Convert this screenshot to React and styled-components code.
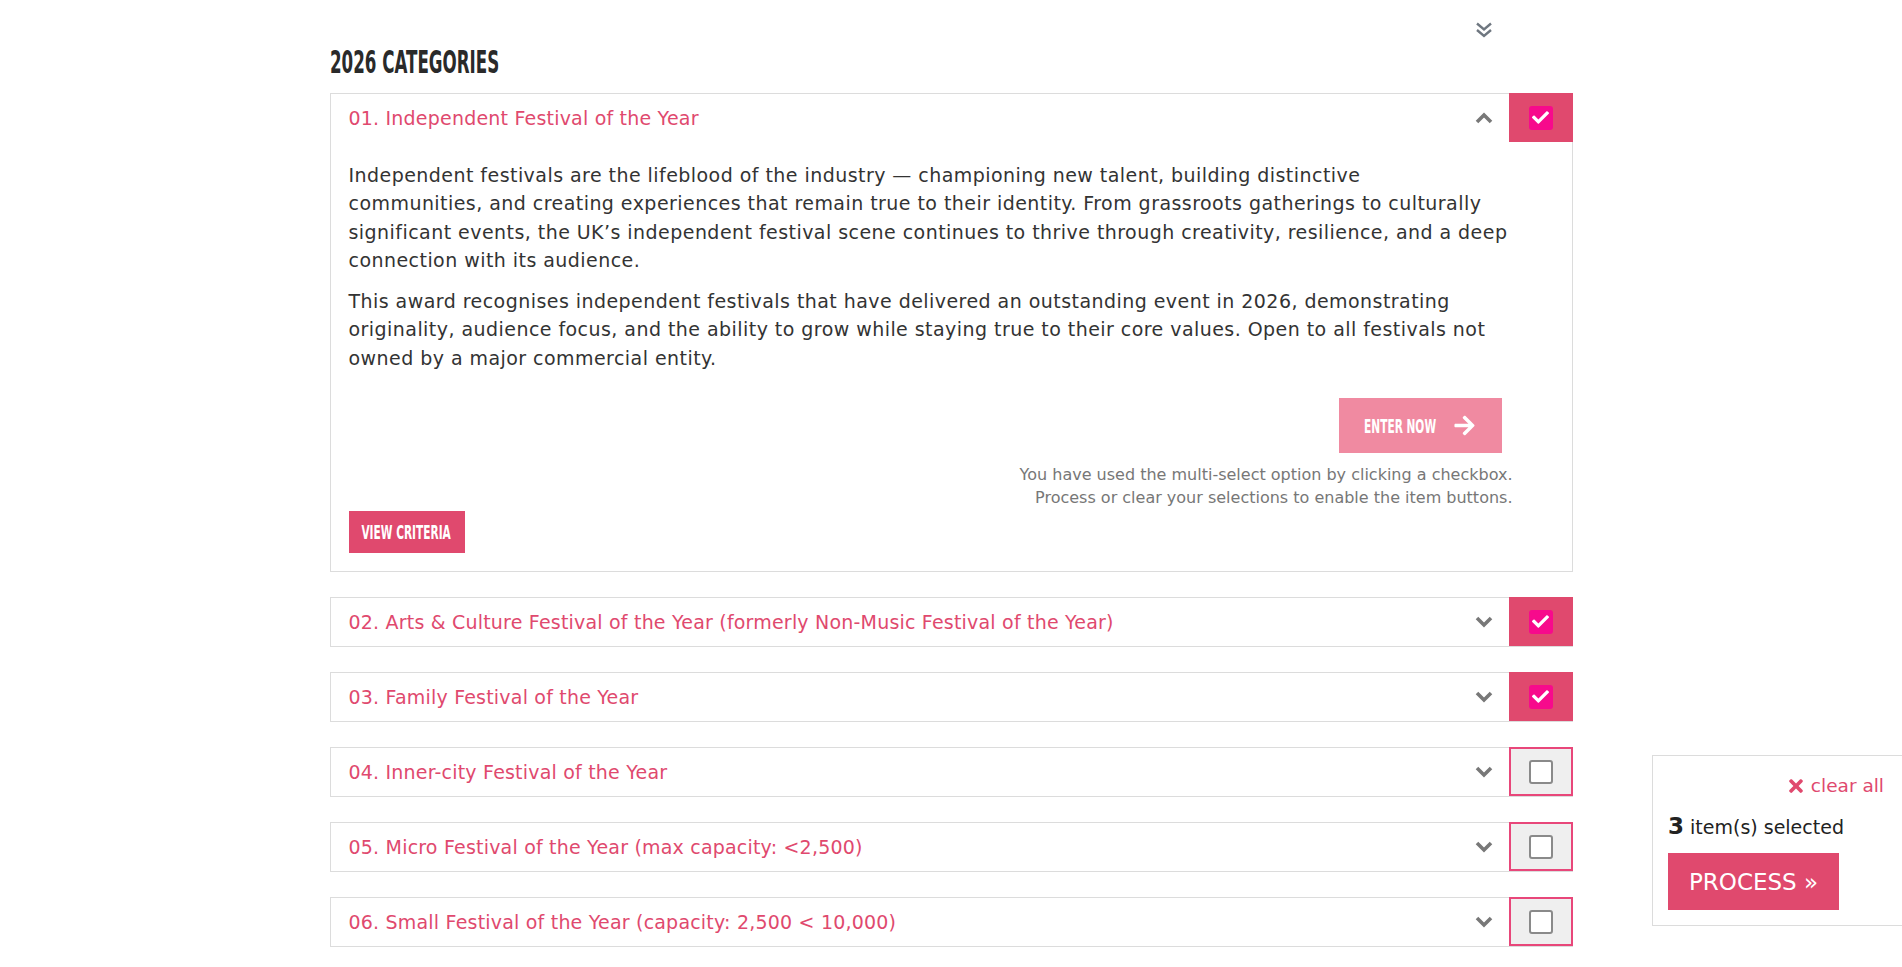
import React, { useState } from "react";
import styled, { createGlobalStyle } from "styled-components";
import { FaArrowRight, FaTimes, FaCheck } from "react-icons/fa";

const pink = "#e0496e";
const body = "'DejaVu Sans', 'Open Sans', sans-serif";
const condensed = "'DejaVu Sans Condensed', 'DejaVu Sans', sans-serif";

const GlobalStyle = createGlobalStyle`
  html, body {
    margin: 0;
    padding: 0;
    background: #fff;
    font-family: ${body};
    color: #333;
  }
`;

const Page = styled.div`
  width: 1243px;
  margin: 0 auto;
`;

const TopBar = styled.div`
  display: flex;
  justify-content: flex-end;
  padding: 22px 80px 0 0;
  height: 16px;
`;

const Heading = styled.h2`
  margin: 10px 0 17px;
  height: 28px;
  font-family: ${condensed};
  font-weight: bold;
  font-size: 32px;
  line-height: 28px;
  text-transform: uppercase;
  color: #2a2a2a;
  transform: scaleX(0.58);
  transform-origin: left center;
  white-space: nowrap;
`;

const List = styled.div`
  display: flex;
  flex-direction: column;
  gap: 25px;
`;

const Item = styled.div`
  border: 1px solid #dcdcdc;
`;

const Header = styled.div`
  display: flex;
  align-items: center;
  height: 48px;
`;

const Title = styled.div`
  flex: 1;
  padding-left: 18px;
  font-size: 19px;
  letter-spacing: 0.2px;
  color: ${pink};
  white-space: nowrap;
`;

const Toggle = styled.svg`
  width: 18px;
  height: 12px;
  margin-right: 16px;
  fill: none;
  stroke: #787878;
  stroke-width: 3.6;
`;

const CheckCell = styled.div`
  display: flex;
  align-items: center;
  justify-content: center;
  box-sizing: border-box;
  width: 64px;
  height: 49px;
  margin: -1px -1px 0 0;
  background: ${({ $on }) => ($on ? pink : "#efefef")};
  border: ${({ $on }) => ($on ? "none" : `2px solid #e8477a`)};
  cursor: pointer;
`;

const Box = styled.div`
  display: flex;
  align-items: center;
  justify-content: center;
  box-sizing: border-box;
  width: 24px;
  height: 24px;
  border-radius: 3px;
  background: ${({ $on }) => ($on ? "#f70a8c" : "#fff")};
  border: ${({ $on }) => ($on ? "none" : "2px solid #8a8a8a")};
  color: #fff;
  font-size: 17px;
`;

const Panel = styled.div`
  padding: 19px 50px 18px 18px;
`;

// paragraphs keep their line breaks
const Para = styled.p`
  margin: 0 0 13px;
  font-size: 19px;
  letter-spacing: 0.45px;
  line-height: 28.3px;
  white-space: pre-line;
  color: #333;
`;

const Actions = styled.div`
  display: flex;
  flex-direction: column;
  align-items: flex-end;
  margin: 26px 20px 0 0;
`;

// condensed caps; the negative margin takes back the space left by the scale
const CondensedLabel = styled.span`
  display: inline-block;
  margin: 0 ${({ $tight }) => ($tight ? "-22px" : "0")};
  font-family: ${condensed};
  font-weight: bold;
  font-size: 19px;
  text-transform: uppercase;
  transform: scaleX(0.62);
  white-space: nowrap;
`;

const EnterButton = styled.div`
  display: flex;
  align-items: center;
  justify-content: center;
  width: 163px;
  height: 55px;
  background: #f08aa1;
  color: #fff;

  svg {
    margin-left: 16px;
    font-size: 23px;
  }
`;

const Note = styled.div`
  margin-top: 10px;
  margin-right: -11px;
  text-align: right;
  font-size: 16px;
  line-height: 23px;
  color: #777;
`;

const CriteriaButton = styled.div`
  display: flex;
  align-items: center;
  justify-content: center;
  width: 116px;
  height: 42px;
  margin-top: 2px;
  background: ${pink};
  color: #fff;
`;

const Basket = styled.div`
  position: fixed;
  top: 755px;
  right: 0;
  box-sizing: border-box;
  width: 250px;
  height: 171px;
  padding: 19px 18px 0 15px;
  border: 1px solid #dcdcdc;
  border-right: none;
  background: #fff;
`;

const ClearAll = styled.div`
  display: flex;
  justify-content: flex-end;
  align-items: center;
  gap: 5px;
  font-size: 18.5px;
  color: ${pink};

  svg {
    font-size: 20px;
  }
`;

const Count = styled.div`
  margin-top: 17px;
  font-size: 19px;
  color: #222;

  b {
    font-size: 23px;
  }
`;

const ProcessButton = styled.div`
  display: flex;
  align-items: center;
  justify-content: center;
  width: 171px;
  height: 57px;
  margin-top: 14px;
  background: ${pink};
  color: #fff;
  font-size: 23px;
`;

const categories = [
  "01. Independent Festival of the Year",
  "02. Arts & Culture Festival of the Year (formerly Non-Music Festival of the Year)",
  "03. Family Festival of the Year",
  "04. Inner-city Festival of the Year",
  "05. Micro Festival of the Year (max capacity: <2,500)",
  "06. Small Festival of the Year (capacity: 2,500 < 10,000)",
];

const intro = [
  "Independent festivals are the lifeblood of the industry — championing new talent, building distinctive",
  "communities, and creating experiences that remain true to their identity. From grassroots gatherings to culturally",
  "significant events, the UK’s independent festival scene continues to thrive through creativity, resilience, and a deep",
  "connection with its audience.",
].join("\n");

const criteria = [
  "This award recognises independent festivals that have delivered an outstanding event in 2026, demonstrating",
  "originality, audience focus, and the ability to grow while staying true to their core values. Open to all festivals not",
  "owned by a major commercial entity.",
].join("\n");

function Chevron({ up }) {
  return (
    <Toggle viewBox="0 0 18 12">
      <polyline points={up ? "2,10 9,3 16,10" : "2,2 9,9 16,2"} />
    </Toggle>
  );
}

function Category({ title, open, checked, onToggle }) {
  return (
    <Item>
      <Header>
        <Title>{title}</Title>
        <Chevron up={open} />
        <CheckCell $on={checked} onClick={onToggle}>
          <Box $on={checked}>{checked && <FaCheck />}</Box>
        </CheckCell>
      </Header>
      {open && (
        <Panel>
          <Para>{intro}</Para>
          <Para>{criteria}</Para>
          <Actions>
            <EnterButton>
              <CondensedLabel $tight>Enter now</CondensedLabel>
              <FaArrowRight />
            </EnterButton>
            <Note>
              You have used the multi-select option by clicking a checkbox.
              <br />
              Process or clear your selections to enable the item buttons.
            </Note>
          </Actions>
          <CriteriaButton>
            <CondensedLabel>View criteria</CondensedLabel>
          </CriteriaButton>
        </Panel>
      )}
    </Item>
  );
}

export default function App() {
  const [selected, setSelected] = useState([true, true, true, false, false, false]);
  const toggle = (i) => setSelected((s) => s.map((v, j) => (j === i ? !v : v)));
  const count = selected.filter(Boolean).length;

  return (
    <>
      <GlobalStyle />
      <Page>
        <TopBar>
          <svg width="18" height="16" viewBox="0 0 18 16" fill="none" stroke="#6f7780" strokeWidth="2.4">
            <polyline points="2,1.5 9,7.5 16,1.5" />
            <polyline points="2,8 9,14 16,8" />
          </svg>
        </TopBar>
        <Heading>2026 Categories</Heading>
        <List>
          {categories.map((c, i) => (
            <Category key={c} title={c} open={i === 0} checked={selected[i]} onToggle={() => toggle(i)} />
          ))}
        </List>
      </Page>
      <Basket>
        <ClearAll>
          <FaTimes />
          clear all
        </ClearAll>
        <Count>
          <b>{count}</b> item(s) selected
        </Count>
        <ProcessButton>PROCESS »</ProcessButton>
      </Basket>
    </>
  );
}
